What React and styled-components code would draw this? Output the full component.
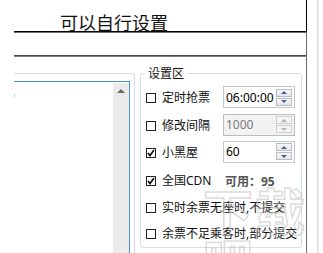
import React from "react";
import styled, { createGlobalStyle } from "styled-components";

const GlobalStyle = createGlobalStyle`
  html, body {
    margin: 0;
    padding: 0;
    background: #ffffff;
  }
  body {
    width: 323px;
    height: 253px;
    overflow: hidden;
    font-family: "Noto Sans", "Noto Sans CJK SC", sans-serif;
  }
`;

const Page = styled.div`
  position: relative;
  display: flex;
  width: 323px;
  height: 253px;
  overflow: hidden;
  background: #fff;
`;

const Main = styled.div`
  display: flex;
  flex-direction: column;
  width: 293px;
  margin-left: 14px;
  height: 100%;
`;

const Gutter = styled.div`
  width: 0;
  margin-left: 10px;
  height: 100%;
  border-left: 1px solid #d7dce4;
  border-right: 1px solid #eceef2;
`;

const TitleBox = styled.div`
  flex: none;
  box-sizing: border-box;
  height: 32px;
  border-right: 1px solid #000;
  border-bottom: 1px solid #000;
  padding: 13px 0 0 46px;
`;

const Title = styled.span`
  display: block;
  font-family: "Noto Sans CJK SC", sans-serif;
  font-size: 18px;
  line-height: 18px;
  color: #111;
  white-space: nowrap;
`;

const InfoBox = styled.div`
  flex: none;
  box-sizing: border-box;
  height: 24px;
  border-top: 1px solid #6c6c6c;
  border-right: 1px solid #6c6c6c;
  border-bottom: 1px solid #4c4c4c;
`;

const ContentBox = styled.div`
  flex: 1;
  min-height: 0;
  overflow: hidden;
  display: flex;
  align-items: flex-start;
  border-top: 1px solid #7d7d7d;
  border-right: 1px solid #6d6d6d;
`;

const ListPanel = styled.div`
  flex: none;
  box-sizing: border-box;
  width: 121px;
  height: 200px;
  margin-top: 16px;
  border-top: 1px solid #d5dde5;
  border-right: 1px solid #d5dde5;
  border-top-right-radius: 3px;
  padding: 7px 4px 0 0;
`;

const ListBox = styled.div`
  position: relative;
  display: flex;
  justify-content: flex-end;
  height: 190px;
  border-top: 1px solid #4f8fc6;
  border-right: 1px solid #4f8fc6;
  padding-top: 1px;
`;

const Caret = styled.span`
  position: absolute;
  left: 0;
  top: 12px;
  width: 1px;
  height: 3px;
  background: #8fe0f5;
`;

const ScrollTrack = styled.div`
  width: 16px;
  height: 100%;
  background: #ebebeb;
  display: flex;
  justify-content: center;
  padding-top: 6px;
  box-sizing: border-box;
`;

const UpArrow = styled.div`
  width: 0;
  height: 0;
  border-left: 4px solid transparent;
  border-right: 4px solid transparent;
  border-bottom: 4px solid #6a6a6a;
`;

const GroupBox = styled.fieldset`
  flex: none;
  box-sizing: border-box;
  width: 162px;
  margin: 9px 0 0 5px;
  padding: 4px 0 0 5px;
  border: 1px solid #d5dde5;
  border-radius: 3px;
  min-width: 0;
`;

const Legend = styled.legend`
  margin-left: -1px;
  padding: 0 3px;
  font-family: "Noto Sans CJK SC", sans-serif;
  font-size: 12px;
  line-height: 14px;
  color: #111;
`;

const Row = styled.div`
  display: grid;
  grid-template-columns: 77px 1fr;
  align-items: center;
  height: ${(p) => p.h}px;
`;

const Check = styled.label`
  display: flex;
  align-items: center;
  gap: 6px;
  white-space: nowrap;
  grid-column: ${(p) => (p.wide ? "1 / span 2" : "auto")};
  font-family: "Noto Sans", "Noto Sans CJK SC", sans-serif;
  font-size: 12px;
  line-height: 14px;
  color: #111;
`;

const Box = styled.span`
  box-sizing: border-box;
  width: 10px;
  height: 10px;
  border: 1px solid #222;
  background: #fff;
  display: flex;
  align-items: center;
  justify-content: center;
  flex: none;
`;

const Spin = styled.div`
  box-sizing: border-box;
  width: 72px;
  height: 22px;
  margin-top: -2px;
  display: flex;
  align-items: center;
  justify-content: space-between;
  padding: 0 2px 0 2px;
  border: 1px solid ${(p) => (p.disabled ? "#b9bcc0" : "#c2c8d0")};
  background: ${(p) => (p.disabled ? "#f2f2f2" : "#fff")};
`;

const SpinText = styled.span`
  font-family: "Noto Sans", sans-serif;
  font-size: 12px;
  color: ${(p) => (p.disabled ? "#7a7a7a" : "#000")};
`;

const SpinButtons = styled.div`
  display: flex;
  flex-direction: column;
  gap: 1px;
`;

const SpinButton = styled.div`
  box-sizing: border-box;
  width: 16px;
  height: 8px;
  border: 1px solid ${(p) => (p.disabled ? "#cfcfcf" : "#b8bdc6")};
  background: ${(p) =>
    p.disabled ? "#f4f4f4" : "linear-gradient(#f7f7f7, #e4e6ea)"};
  display: flex;
  align-items: center;
  justify-content: center;
`;

const Tri = styled.span`
  width: 0;
  height: 0;
  border-left: 3px solid transparent;
  border-right: 3px solid transparent;
  ${(p) => (p.down ? "border-top" : "border-bottom")}: 3px solid
    ${(p) => (p.disabled ? "#b0b0b0" : "#3f5f9c")};
`;

const Available = styled.span`
  padding-left: 2px;
  font-family: "Noto Sans", "Noto Sans CJK SC", sans-serif;
  font-size: 12px;
  font-weight: bold;
  color: #555;
  white-space: nowrap;
`;

const Watermark = styled.div`
  position: absolute;
  left: 203px;
  top: 184px;
  pointer-events: none;
  display: flex;
  flex-direction: column;
  line-height: 1;
`;

const WatermarkLogo = styled.span`
  font-family: "Noto Sans CJK SC", sans-serif;
  font-size: 50px;
  font-weight: bold;
  letter-spacing: 2px;
  color: transparent;
  -webkit-text-stroke: 1.5px rgba(195, 195, 195, 0.6);
`;

const WatermarkUrl = styled.span`
  margin: -4px 0 0 26px;
  font-family: "Liberation Sans", sans-serif;
  font-size: 12px;
  color: transparent;
  -webkit-text-stroke: 0.7px rgba(185, 185, 185, 0.6);
`;

function CheckBox({ checked }) {
  return (
    <Box>
      {checked && (
        <svg width="8" height="8" viewBox="0 0 8 8">
          <path d="M1 4 L3 6.5 L7 1" fill="none" stroke="#111" strokeWidth="1.7" />
        </svg>
      )}
    </Box>
  );
}

function SpinBox({ value, disabled }) {
  return (
    <Spin disabled={disabled}>
      <SpinText disabled={disabled}>{value}</SpinText>
      <SpinButtons>
        <SpinButton disabled={disabled}>
          <Tri disabled={disabled} />
        </SpinButton>
        <SpinButton disabled={disabled}>
          <Tri down disabled={disabled} />
        </SpinButton>
      </SpinButtons>
    </Spin>
  );
}

export default function App() {
  return (
    <>
      <GlobalStyle />
      <Page>
        <Main>
          <TitleBox>
            <Title>可以自行设置</Title>
          </TitleBox>
          <InfoBox />
          <ContentBox>
            <ListPanel>
              <ListBox>
                <Caret />
                <ScrollTrack>
                  <UpArrow />
                </ScrollTrack>
              </ListBox>
            </ListPanel>
            <GroupBox>
              <Legend>设置区</Legend>
              <Row h={28}>
                <Check>
                  <CheckBox />
                  定时抢票
                </Check>
                <SpinBox value="06:00:00" />
              </Row>
              <Row h={27}>
                <Check>
                  <CheckBox />
                  修改间隔
                </Check>
                <SpinBox value="1000" disabled />
              </Row>
              <Row h={27}>
                <Check>
                  <CheckBox checked />
                  小黑屋
                </Check>
                <SpinBox value="60" />
              </Row>
              <Row h={29}>
                <Check>
                  <CheckBox checked />
                  全国CDN
                </Check>
                <Available>可用：95</Available>
              </Row>
              <Row h={26}>
                <Check wide>
                  <CheckBox />
                  实时余票无座时,不提交
                </Check>
              </Row>
              <Row h={26}>
                <Check wide>
                  <CheckBox />
                  余票不足乘客时,部分提交
                </Check>
              </Row>
            </GroupBox>
          </ContentBox>
        </Main>
        <Gutter />
        <Watermark>
          <WatermarkLogo>下载吧</WatermarkLogo>
          <WatermarkUrl>www.xiazaiba.com</WatermarkUrl>
        </Watermark>
      </Page>
    </>
  );
}
